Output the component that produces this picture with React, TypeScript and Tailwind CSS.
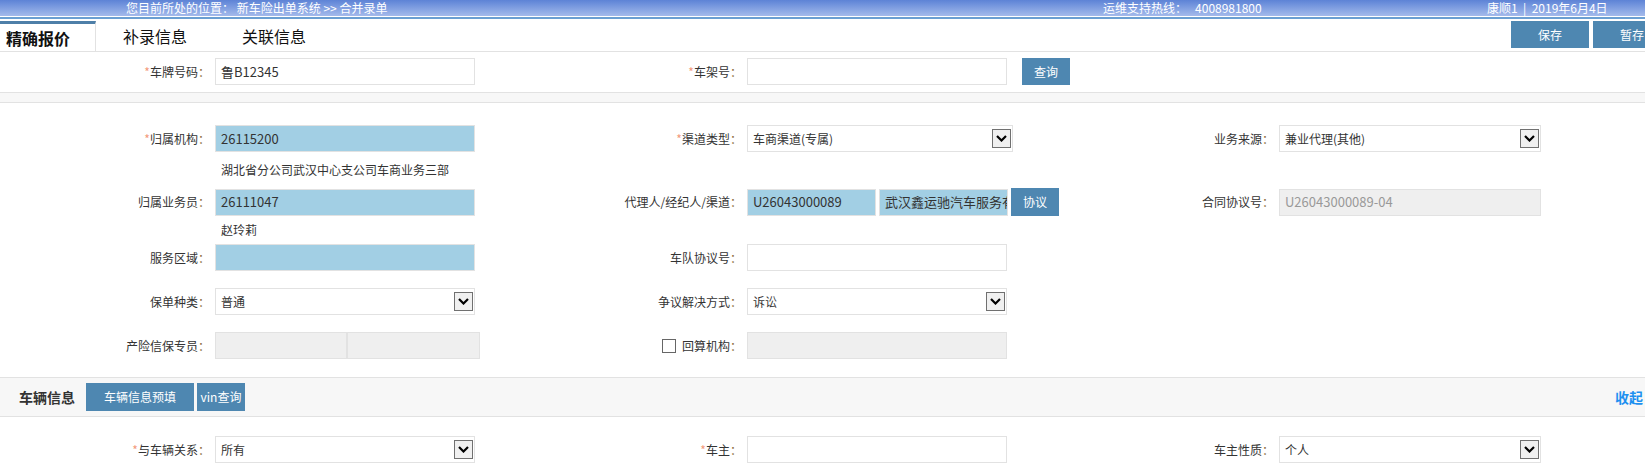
import React from "react";

const FONT = { fontFamily: '"Microsoft YaHei", "Noto Sans CJK SC", "Noto Sans", sans-serif' };

function Label({ text, req, w = "w-[212px]" }: { text: string; req?: boolean; w?: string }) {
  return (
    <div className={`${w} shrink-0 pr-[2px] text-right text-[12px] text-[#333]`}>
      {req && <span className="text-[#f39a7c]">*</span>}
      {text}
      <span className="text-[#8a6d3b]">：</span>
    </div>
  );
}

function Input({ value, variant = "white", w = "w-[260px]", muted }: { value?: string; variant?: "white" | "blue" | "gray"; w?: string; muted?: boolean }) {
  const bg = variant === "blue" ? "bg-[#a2cfe4]" : variant === "gray" ? "bg-[#efefef]" : "bg-white";
  return (
    <div className={`${w} h-[27px] shrink-0 border border-[#e2e2e2] ${bg} flex items-center pl-[5px] text-[13px] overflow-hidden whitespace-nowrap ${muted ? "text-[#999]" : "text-[#333]"}`}>
      {value && <span className="block overflow-hidden whitespace-nowrap">{value}</span>}
    </div>
  );
}

function Select({ value, w = "w-[260px]" }: { value: string; w?: string }) {
  return (
    <div className={`${w} h-[27px] shrink-0 border border-[#e2e2e2] bg-white flex items-center justify-between pl-[5px] pr-[1px] text-[12px] text-[#333]`}>
      <span>{value}</span>
      <div className="w-[19px] h-[19px] border border-[#707070] bg-[#f0f0f0] flex items-center justify-center">
        <svg width="11" height="7" viewBox="0 0 11 7">
          <path d="M1 1 L5.5 5.5 L10 1" fill="none" stroke="#000" strokeWidth="2.2" />
        </svg>
      </div>
    </div>
  );
}

function Btn({ text, w, h = "h-[27px]" }: { text: string; w: string; h?: string }) {
  return (
    <div className={`${w} ${h} bg-[#4e87b1] text-white text-[12px] flex items-center justify-center shrink-0`}>{text}</div>
  );
}

function Row({ children, className = "" }: { children: React.ReactNode; className?: string }) {
  return <div className={`grid grid-cols-[532px_532px_1fr] items-center ${className}`}>{children}</div>;
}

function Cell({ children }: { children?: React.ReactNode }) {
  return <div className="flex items-center gap-[3px]">{children}</div>;
}

export default function App() {
  return (
    <div className="w-[1645px] h-[472px] overflow-hidden bg-white" style={FONT}>
      {/* top bar */}
      <div className="h-[16px] bg-gradient-to-b from-[#5d83d6] to-[#a4baeb] flex items-center text-white text-[12px] leading-[16px] relative">
        <div className="absolute left-[126px] top-0">您目前所处的位置： 新车险出单系统 &gt;&gt; 合并录单</div>
        <div className="absolute left-[1103px] top-0">运维支持热线：&nbsp;&nbsp;&nbsp;4008981800</div>
        <div className="absolute left-[1487px] top-0">康顺1&nbsp;&nbsp;|&nbsp;&nbsp;2019年6月4日</div>
      </div>
      <div className="h-[1px] bg-white" />
      <div className="h-[2px] bg-[#6b9fd2]" />
      {/* tabs */}
      <div className="h-[33px] border-b border-[#e2e2e2] flex items-end relative">
        <div className="w-[96px] h-[30px] border-t-[3px] border-[#4e7fa8] border-r border-r-[#e2e2e2] flex items-center pl-[6px] text-[16px] font-bold text-[#111]">精确报价</div>
        <div className="h-[30px] flex items-center ml-[27px] text-[16px] text-[#111]">补录信息</div>
        <div className="h-[30px] flex items-center ml-[55px] text-[16px] text-[#111]">关联信息</div>
        <div className="absolute right-0 top-[2px] flex gap-[4px]">
          <Btn text="保存" w="w-[78px]" h="h-[27px]" />
          <div className="w-[52px] h-[27px] bg-[#4e87b1] text-white text-[12px] flex items-center pl-[27px] overflow-hidden whitespace-nowrap">暂存</div>
        </div>
      </div>
      {/* row 1 */}
      <Row className="pt-[6px] pb-[7px]">
        <Cell>
          <Label text="车牌号码" req />
          <Input value="鲁B12345" />
        </Cell>
        <Cell>
          <Label text="车架号" req />
          <Input />
          <div className="ml-[12px]"><Btn text="查询" w="w-[48px]" /></div>
        </Cell>
        <div />
      </Row>
      <div className="h-[11px] bg-[#f7f7f7] border-y border-[#e2e2e2]" />
      {/* main form */}
      <div className="pt-[22px]">
        <Row>
          <Cell>
            <Label text="归属机构" req />
            <Input value="26115200" variant="blue" />
          </Cell>
          <Cell>
            <Label text="渠道类型" req />
            <Select value="车商渠道(专属)" w="w-[266px]" />
          </Cell>
          <Cell>
            <Label text="业务来源" />
            <Select value="兼业代理(其他)" w="w-[262px]" />
          </Cell>
        </Row>
        <div className="h-[36px] flex items-center pl-[221px] text-[12px] text-[#333]">湖北省分公司武汉中心支公司车商业务三部</div>
        <Row>
          <Cell>
            <Label text="归属业务员" />
            <Input value="26111047" variant="blue" />
          </Cell>
          <Cell>
            <Label text="代理人/经纪人/渠道" />
            <Input value="U26043000089" variant="blue" w="w-[129px]" />
            <Input value="武汉鑫运驰汽车服务有限公司" variant="blue" w="w-[129px]" />
            <Btn text="协议" w="w-[48px]" h="h-[28px]" />
          </Cell>
          <Cell>
            <Label text="合同协议号" />
            <Input value="U26043000089-04" variant="gray" w="w-[262px]" muted />
          </Cell>
        </Row>
        <div className="h-[28px] flex items-center pl-[221px] text-[12px] text-[#333]">赵玲莉</div>
        <Row>
          <Cell>
            <Label text="服务区域" />
            <Input variant="blue" />
          </Cell>
          <Cell>
            <Label text="车队协议号" />
            <Input />
          </Cell>
          <div />
        </Row>
        <Row className="mt-[17px]">
          <Cell>
            <Label text="保单种类" />
            <Select value="普通" />
          </Cell>
          <Cell>
            <Label text="争议解决方式" />
            <Select value="诉讼" />
          </Cell>
          <div />
        </Row>
        <Row className="mt-[17px]">
          <Cell>
            <Label text="产险信保专员" />
            <Input variant="gray" w="w-[132px]" />
            <div className="-ml-[3px]"><Input variant="gray" w="w-[133px]" /></div>
          </Cell>
          <Cell>
            <div className="w-[212px] shrink-0 flex items-center justify-end pr-[2px] text-[12px] text-[#333]">
              <span className="w-[14px] h-[14px] border border-[#666] bg-white mr-[2px]" />
              <span className="ml-[4px]">回算机构</span><span className="text-[#8a6d3b]">：</span>
            </div>
            <Input variant="gray" />
          </Cell>
          <div />
        </Row>
      </div>
      {/* vehicle section */}
      <div className="mt-[18px] h-[40px] bg-[#f7f7f7] border-y border-[#e2e2e2] flex items-center relative">
        <div className="ml-[19px] text-[14px] font-bold text-[#333]">车辆信息</div>
        <div className="ml-[11px]"><Btn text="车辆信息预填" w="w-[108px]" h="h-[28px]" /></div>
        <div className="ml-[3px]"><Btn text="vin查询" w="w-[48px]" h="h-[28px]" /></div>
        <div className="absolute right-[2px] text-[14px] font-bold text-[#1e90f0]">收起</div>
      </div>
      <Row className="mt-[19px]">
        <Cell>
          <Label text="与车辆关系" req />
          <Select value="所有" />
        </Cell>
        <Cell>
          <Label text="车主" req />
          <Input />
        </Cell>
        <Cell>
          <Label text="车主性质" />
          <Select value="个人" w="w-[262px]" />
        </Cell>
      </Row>
    </div>
  );
}
